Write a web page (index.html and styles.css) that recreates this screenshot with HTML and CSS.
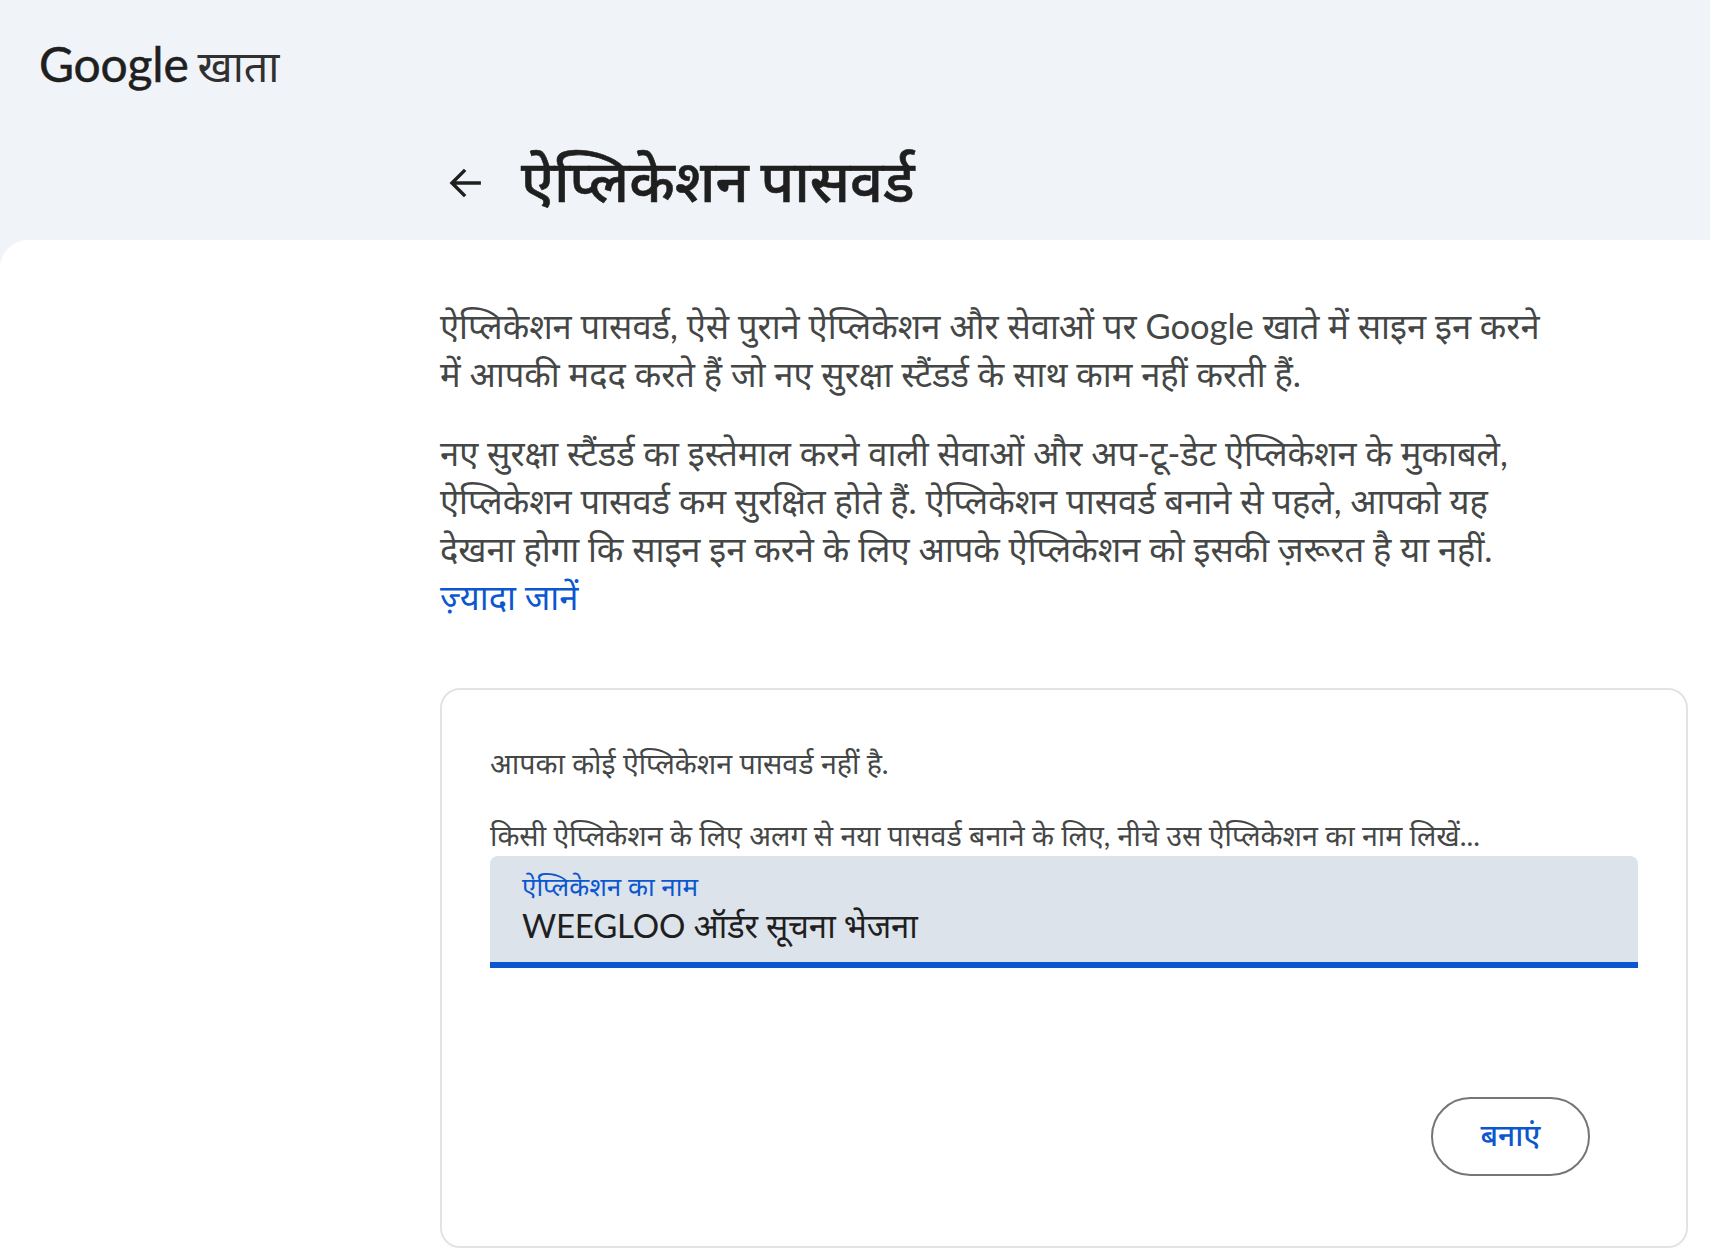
FILE: index.html
```html
<!DOCTYPE html>
<html lang="hi">
<head>
<meta charset="utf-8">
<title>ऐप्लिकेशन पासवर्ड</title>
<link rel="stylesheet" href="styles.css">
</head>
<body>
<header class="top">
  <div class="brand"><span class="brand-google">Google</span><span class="brand-product">खाता</span></div>
  <div class="title-row">
    <a class="back" href="#" aria-label="वापस जाएं">
      <svg viewBox="0 0 24 24" width="42" height="42" aria-hidden="true"><path d="M20.5 12H4.5M11.5 4.5 4 12l7.5 7.5" fill="none" stroke="#1f1f1f" stroke-width="2"/></svg>
    </a>
    <h1 class="title">ऐप्लिकेशन पासवर्ड</h1>
  </div>
</header>
<main class="panel">
  <div class="intro">
    <p class="para">ऐप्लिकेशन पासवर्ड, ऐसे पुराने ऐप्लिकेशन और सेवाओं पर Google खाते में साइन इन करने में आपकी मदद करते हैं जो नए सुरक्षा स्टैंडर्ड के साथ काम नहीं करती हैं.</p>
    <p class="para">नए सुरक्षा स्टैंडर्ड का इस्तेमाल करने वाली सेवाओं और अप-टू-डेट ऐप्लिकेशन के मुकाबले, ऐप्लिकेशन पासवर्ड कम सुरक्षित होते हैं. ऐप्लिकेशन पासवर्ड बनाने से पहले, आपको यह देखना होगा कि साइन इन करने के लिए आपके ऐप्लिकेशन को इसकी ज़रूरत है या नहीं. <a class="link" href="#">ज़्यादा जानें</a></p>
  </div>
  <section class="card">
    <p class="note">आपका कोई ऐप्लिकेशन पासवर्ड नहीं है.</p>
    <p class="note note-second">किसी ऐप्लिकेशन के लिए अलग से नया पासवर्ड बनाने के लिए, नीचे उस ऐप्लिकेशन का नाम लिखें...</p>
    <div class="field">
      <label class="field-label" for="app">ऐप्लिकेशन का नाम</label>
      <input class="field-input" id="app" type="text" value="WEEGLOO ऑर्डर सूचना भेजना">
    </div>
    <div class="actions"><button class="create" type="button">बनाएं</button></div>
  </section>
</main>
</body>
</html>
```
FILE: styles.css
```css
* { box-sizing: border-box; }
html, body { margin: 0; padding: 0; }
body {
  background: #f0f4f9;
  color: #1f1f1f;
  font-family: "Lato", "Noto Sans", sans-serif;
  height: 1256px;
  overflow: hidden;
}
.top { height: 240px; padding: 34px 0 0 39px; }
.brand { display: flex; align-items: baseline; gap: 9px; height: 60px; }
.brand-google { font-family: "Lato", sans-serif; font-size: 48px; line-height: 60px; letter-spacing: -0.2px; color: #1f1f1f; -webkit-text-stroke: 0.5px #1f1f1f; }
.brand-product { font-size: 43px; line-height: 60px; color: #303030; }
.title-row { display: flex; align-items: center; margin: 51px 0 0 406px; height: 70px; }
.back { display: flex; width: 76px; margin-top: 6px; }
.title { margin: 0; font-size: 58px; line-height: 70px; font-weight: 500; word-spacing: -3px; color: #1f1f1f; -webkit-text-stroke: 0.6px #1f1f1f; }
.panel { background: #fff; border-radius: 28px 0 0 0; padding: 62px 22px 8px 440px; height: 1016px; }
.intro { width: 1110px; }
.para { margin: 0 0 31px; font-size: 34.5px; line-height: 48px; color: #444746; }
.link { color: #0b57d0; text-decoration: none; }
.card { margin-top: 67px; height: 560px; border: 2px solid #e3e3e3; border-radius: 20px; padding: 54px 48px 0; }
.note { margin: 0; font-size: 28.6px; line-height: 38px; color: #444746; }
.note-second { margin-top: 34px; }
.field { position: relative; height: 112px; margin-top: 2px; background: #dde3ea; border-bottom: 6px solid #0b57d0; border-radius: 8px 8px 0 0; }
.field-label { position: absolute; left: 32px; top: 14px; font-size: 26px; line-height: 32px; color: #0b57d0; }
.field-input { width: 100%; height: 100%; padding: 33px 32px 0; border: 0; background: transparent; font: inherit; font-size: 33px; letter-spacing: -0.2px; color: #1f1f1f; outline: none; }
.actions { display: flex; justify-content: flex-end; margin-top: 129px; padding-right: 48px; }
.create { width: 159px; height: 79px; padding: 0 0 4px; background: #fff; border: 2px solid #747775; border-radius: 40px; font: inherit; font-size: 30px; font-weight: 500; color: #0b57d0; }
```
